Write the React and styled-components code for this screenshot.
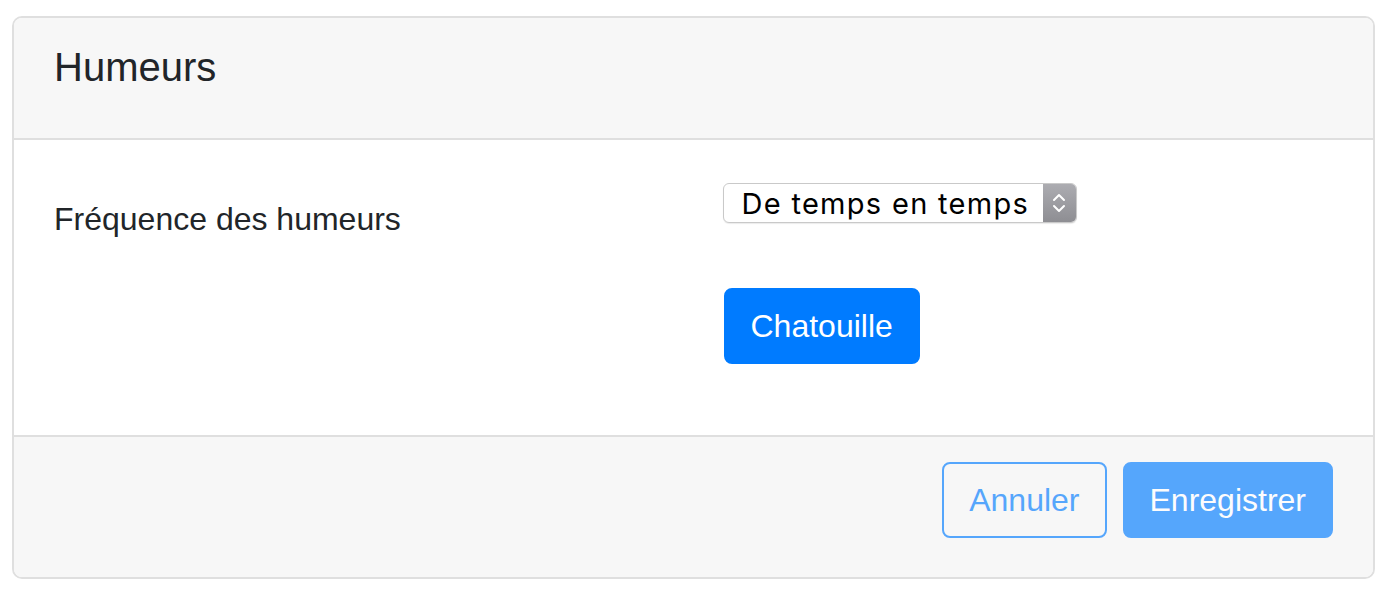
import React from "react";
import styled, { createGlobalStyle } from "styled-components";

const GlobalStyle = createGlobalStyle`
  body {
    margin: 0;
    background: #fff;
    font-family: "Liberation Sans", Arial, sans-serif;
    color: #212529;
  }
`;

const Page = styled.div`
  padding: 16px 15px 15px 12px;
`;

const Card = styled.div`
  border: 2px solid #dfdfdf;
  border-radius: 10px;
  overflow: hidden;
  background: #fff;
`;

const Header = styled.div`
  background: #f7f7f7;
  border-bottom: 2px solid #dfdfdf;
  padding: 25px 40px 47px;
`;

const Title = styled.h5`
  margin: 0;
  font-size: 40px;
  line-height: 48px;
  font-weight: 400;
`;

const Body = styled.div`
  padding: 40px 40px 71px;
`;

const FormRow = styled.div`
  display: grid;
  grid-template-columns: 1fr 1fr;
  column-gap: 60px;
`;

const Label = styled.label`
  padding-top: 15px;
  font-size: 32px;
  line-height: 48px;
`;

const Field = styled.div`
  display: flex;
  flex-direction: column;
  align-items: flex-start;
`;

const Select = styled.div`
  margin-top: 3px;
  margin-left: -1px;
  width: 354px;
  height: 40px;
  box-sizing: border-box;
  border: 1px solid #c9c9c9;
  border-radius: 6px;
  display: flex;
  overflow: hidden;
  background: #fff;
  box-shadow: 0 1px 1px rgba(0, 0, 0, 0.08);
`;

const SelectText = styled.span`
  flex: 1;
  padding-left: 18px;
  font-family: Inter, "Liberation Sans", sans-serif;
  font-size: 29px;
  letter-spacing: 1.3px;
  line-height: 39px;
  color: #000;
  white-space: nowrap;
`;

const Stepper = styled.span`
  width: 33px;
  display: flex;
  align-items: center;
  justify-content: center;
  background: linear-gradient(#acacb1, #8e8e93);
`;

const Button = styled.button`
  font-family: "Liberation Sans", Arial, sans-serif;
  font-size: 32px;
  line-height: 48px;
  padding: 12px 25px;
  border-radius: 8px;
  border: 2px solid #007bff;
  background: ${(p) => (p.$outline ? "transparent" : "#007bff")};
  color: ${(p) => (p.$outline ? "#007bff" : "#fff")};
  opacity: ${(p) => (p.$disabled ? 0.65 : 1)};
  cursor: pointer;
`;

const ActionButton = styled(Button)`
  margin-top: 65px;
`;

const Footer = styled.div`
  background: #f7f7f7;
  border-top: 2px solid #dfdfdf;
  padding: 25px 40px 39px;
  display: flex;
  justify-content: flex-end;
  gap: 16px;
`;

function Chevrons() {
  return (
    <svg width="14" height="22" viewBox="0 0 14 22" fill="none" stroke="#fff" strokeWidth="2" strokeLinecap="round" strokeLinejoin="round">
      <path d="M2 8 L7 3 L12 8" />
      <path d="M2 14 L7 19 L12 14" />
    </svg>
  );
}

export default function App() {
  return (
    <Page>
      <GlobalStyle />
      <Card>
        <Header>
          <Title>Humeurs</Title>
        </Header>
        <Body>
          <FormRow>
            <Label>Fréquence des humeurs</Label>
            <Field>
              <Select>
                <SelectText>De temps en temps</SelectText>
                <Stepper>
                  <Chevrons />
                </Stepper>
              </Select>
              <ActionButton>Chatouille</ActionButton>
            </Field>
          </FormRow>
        </Body>
        <Footer>
          <Button $outline $disabled>Annuler</Button>
          <Button $disabled>Enregistrer</Button>
        </Footer>
      </Card>
    </Page>
  );
}
